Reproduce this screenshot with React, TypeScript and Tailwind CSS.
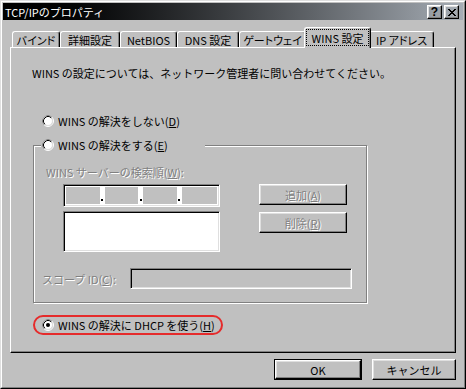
import React from "react";

const raised =
  "border border-t-white border-l-white border-r-black border-b-black shadow-[inset_-1px_-1px_0_#808080,inset_1px_1px_0_#dfdfdf]";
const sunken =
  "border border-t-[#808080] border-l-[#808080] border-r-white border-b-white shadow-[inset_1px_1px_0_#000,inset_-1px_-1px_0_#dfdfdf]";
const dimText = "text-[#808080] [text-shadow:1px_1px_0_#fff]";

const TABS = [
  { label: "バインド", w: "w-[48px]" },
  { label: "詳細設定", w: "w-[60px]" },
  { label: "NetBIOS", w: "w-[57px]" },
  { label: "DNS 設定", w: "w-[62px]" },
  { label: "ゲートウェイ", w: "w-[67px]" },
  { label: "WINS 設定", w: "w-[67px]", active: true },
  { label: "IP アドレス", w: "w-[65px]" },
];

// 8x7 close glyph
const CLOSE = ["XX....XX", ".XX..XX.", "..XXXX..", "...XX...", "..XXXX..", ".XX..XX.", "XX....XX"];

function CloseGlyph() {
  return (
    <svg width="8" height="7" viewBox="0 0 8 7" shapeRendering="crispEdges">
      {CLOSE.flatMap((row, y) =>
        row.split("").map((c, x) => (c === "X" ? <rect key={`${x}-${y}`} x={x} y={y} width="1" height="1" fill="#000" /> : null))
      )}
    </svg>
  );
}

function Radio({ checked }: { checked?: boolean }) {
  return (
    <svg width="12" height="12" viewBox="0 0 12 12" className="shrink-0">
      <circle cx="6" cy="6" r="5.5" fill="none" stroke="#fff" />
      <path d="M2.11 9.89A5.5 5.5 0 0 1 9.89 2.11" fill="none" stroke="#808080" />
      <circle cx="6" cy="6" r="4.5" fill="#fff" stroke="#dfdfdf" />
      <path d="M2.82 9.18A4.5 4.5 0 0 1 9.18 2.82" fill="none" stroke="#000" />
      {checked && <circle cx="6" cy="6" r="2" fill="#000" />}
    </svg>
  );
}

function Key({ children }: { children: React.ReactNode }) {
  return <span className="underline underline-offset-1">{children}</span>;
}

export default function App() {
  return (
    <div className="w-[466px] h-[389px] bg-[#c0c0c0] border border-t-[#dfdfdf] border-l-[#dfdfdf] border-r-black border-b-black font-['Noto_Sans_CJK_JP',sans-serif] text-[11px] leading-[12px] text-black">
      <div className="h-full border border-t-white border-l-white border-r-[#808080] border-b-[#808080] p-px">
        {/* タイトルバー */}
        <div className="h-[17px] flex items-center bg-linear-to-r from-black to-[#a6adb5] pl-[2px] pr-[4px]">
          <span className="text-white whitespace-nowrap">TCP/IPのプロパティ</span>
          <div className="ml-auto self-start mt-[2px] flex gap-[2px]">
            <div className={`w-[15px] h-[14px] flex items-center justify-center ${raised}`}>
              <span className="font-['Liberation_Sans',sans-serif] font-bold text-[12px] leading-none">?</span>
            </div>
            <div className={`w-[15px] h-[14px] flex items-center justify-center ${raised}`}>
              <CloseGlyph />
            </div>
          </div>
        </div>

        <div className="pl-[7px]">
          {/* タブ */}
          <div className="flex items-end h-[20px] mt-[7px] pl-[2px]">
            {TABS.map((t) =>
              t.active ? (
                <div
                  key={t.label}
                  className={`relative z-10 ${t.w} -mx-[2px] h-[21px] -mb-px bg-[#c0c0c0] border-t border-l border-r border-t-white border-l-white border-r-black shadow-[inset_-1px_0_0_#808080] rounded-t-[3px] pt-px px-px`}
                >
                  <div className="h-[17px] border border-dotted border-black flex items-center justify-center whitespace-nowrap">
                    {t.label}
                  </div>
                </div>
              ) : (
                <div
                  key={t.label}
                  className={`${t.w} h-[16px] shrink-0 border-t border-l border-r border-t-white border-l-white border-r-black shadow-[inset_-1px_0_0_#808080] rounded-t-[3px] flex items-center justify-center whitespace-nowrap [font-feature-settings:'palt']`}
                >
                  {t.label}
                </div>
              )
            )}
          </div>

          {/* パネル */}
          <div className="w-[446px] h-[306px] border border-t-white border-l-white border-r-black border-b-black shadow-[inset_-1px_-1px_0_#808080] pl-[21px] pt-[19px]">
            <p className="whitespace-nowrap">WINS の設定については、ネットワーク管理者に問い合わせてください。</p>

            <div className="mt-[34px] ml-[10px] h-[16px] flex items-center gap-[4px]">
              <Radio />
              <span className="whitespace-nowrap">
                WINS の解決をしない(<Key>D</Key>)
              </span>
            </div>

            <fieldset className="mt-[8px] ml-px w-[334px] border border-[#808080] shadow-[1px_1px_0_#fff,inset_1px_1px_0_#fff] pb-[13px]">
              <legend className="ml-[7px] w-[164px] h-[16px] pl-px flex items-center gap-[4px] bg-[#c0c0c0]">
                <Radio />
                <span className="whitespace-nowrap">
                  WINS の解決をする(<Key>E</Key>)
                </span>
              </legend>

              <div className={`mt-[13px] ml-[12px] whitespace-nowrap ${dimText}`}>
                WINS サーバーの検索順(<Key>W</Key>):
              </div>

              <div className="mt-[6px] ml-[29px] flex">
                <div className="w-[157px] flex flex-col gap-[4px]">
                  <div className={`h-[23px] flex bg-white ${sunken} p-[2px]`}>
                    {[0, 1, 2, 3].map((i) => (
                      <React.Fragment key={i}>
                        {i > 0 && (
                          <div className="w-[5px] flex items-end justify-center pb-[3px]">
                            <div className="w-[2px] h-[2px] bg-black" />
                          </div>
                        )}
                        <div className={`${i === 3 ? "w-[36px]" : "w-[34px]"} h-full bg-[#c0c0c0]`} />
                      </React.Fragment>
                    ))}
                  </div>
                  <div className={`h-[41px] bg-white ${sunken}`} />
                </div>
                <div className="ml-[39px] flex flex-col gap-[7px]">
                  <div className={`w-[88px] h-[21px] flex items-center justify-center ${raised} ${dimText}`}>
                    追加(<Key>A</Key>)
                  </div>
                  <div className={`w-[88px] h-[21px] flex items-center justify-center ${raised} ${dimText}`}>
                    削除(<Key>R</Key>)
                  </div>
                </div>
              </div>

              <div className="mt-[16px] ml-[8px] h-[21px] flex items-center">
                <span className={`w-[88px] whitespace-nowrap ${dimText}`}>
                  スコープ ID(<Key>C</Key>):
                </span>
                <div className={`w-[222px] h-[21px] bg-[#c0c0c0] ${sunken}`} />
              </div>
            </fieldset>

            <div className="mt-[12px] ml-px w-[190px] h-[20px] border-2 border-[#e52b2b] rounded-full flex items-center pl-[7px] gap-[4px]">
              <Radio checked />
              <span className="whitespace-nowrap">
                WINS の解決に DHCP を使う(<Key>H</Key>)
              </span>
            </div>
          </div>

          {/* ボタン */}
          <div className="w-[446px] mt-[6px] flex justify-end gap-[10px]">
            <div className="w-[88px] h-[21px] border border-black">
              <div className={`h-full flex items-center justify-center ${raised}`}>OK</div>
            </div>
            <div className={`w-[84px] h-[21px] flex items-center justify-center ${raised}`}>キャンセル</div>
          </div>
        </div>
      </div>
    </div>
  );
}
